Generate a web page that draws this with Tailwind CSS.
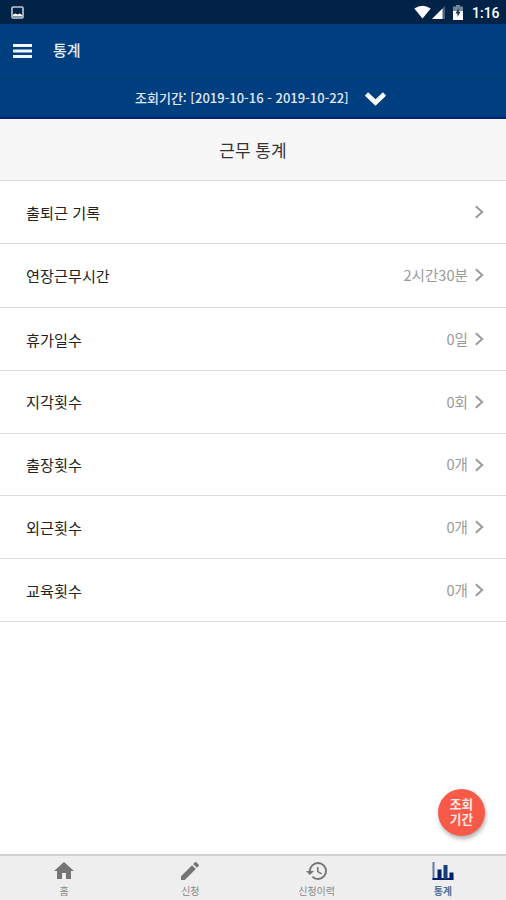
<!DOCTYPE html>
<html lang="ko">
<head>
<meta charset="utf-8">
<title>통계</title>
<script src="https://cdn.jsdelivr.net/npm/@tailwindcss/browser@4"></script>
</head>
<body class="bg-white">
<svg class="hidden"><symbol id="chev" viewBox="0 0 10 14"><path d="M1.800 1.200 8.200 7 1.800 12.800" fill="none" stroke="#9b9b9b" stroke-width="2"/></symbol></svg>
<div class="relative flex h-[900px] w-[506px] flex-col overflow-hidden bg-white font-['Noto_Sans_CJK_KR','Noto_Sans',sans-serif]">
  <div class="flex h-6 shrink-0 items-center bg-[#002347] pl-[11px] pr-[7px] text-white">
    <svg class="h-[13px] w-[13px]" viewBox="0 0 13 13"><rect x="1" y="1" width="11" height="11" rx="1" fill="none" stroke="#c3cbd8" stroke-width="1.6"/><path d="M2 10.500V8.500L4.500 7.500 6.500 8.500 9 7.500 11 9v1.500z" fill="#fff"/></svg>
    <svg class="ml-auto h-[14px] w-[17px]" viewBox="0 0 17 14"><path d="M0.3 3.6Q8.500-2 16.700 3.600L8.500 13.500z" fill="#fff"/></svg>
    <svg class="ml-[1px] mt-px h-[13px] w-[13px]" viewBox="0 0 13 13"><path d="M13 0v13H0z" fill="#4a617d"/><path d="M10.500 2.500V13H0z" fill="#fff"/></svg>
    <svg class="ml-[8px] h-[15px] w-[10px]" viewBox="0 0 10 15"><path d="M3 0h4v1.500h3V15H0V1.500h3z" fill="#71859c"/><path d="M0 6h10v9H0z" fill="#fff"/><path d="M5.800 3 2.500 8.500h2V12L7.600 6.700H5.800z" fill="#173654"/></svg>
    <span class="ml-[9px] w-[27px] whitespace-nowrap pt-[2px] font-[Roboto] text-[14px] font-medium leading-[22px]">1:16</span>
  </div>
  <header class="flex h-[53px] shrink-0 items-center bg-[#003f7f] pl-[13px] text-[#e4ecf8]">
    <svg class="h-[14px] w-[19px]" viewBox="0 0 19 14"><path d="M0 1.500h19M0 7h19M0 12.500h19" stroke="#f2f5fc" stroke-width="3"/></svg>
    <h1 class="-mt-[2px] ml-[21px] text-[15px] font-medium leading-6">통계</h1>
  </header>
  <div class="flex h-[42px] shrink-0 items-center border-t border-b-2 border-t-[#07396f] border-b-[#00207a] bg-[#003f7f] pl-[135px] text-[#e0e8f6]">
    <span class="w-[215px] whitespace-nowrap text-[13px] font-medium leading-5">조회기간: [2019-10-16 - 2019-10-22]</span>
    <svg class="ml-[15px] mt-[3px] h-[14px] w-[21px]" viewBox="0 0 21 14"><path d="M1.500 2 10.500 10.500 19.500 2" fill="none" stroke="#fff" stroke-width="4.600"/></svg>
  </div>
  <h2 class="flex h-[62px] shrink-0 items-center justify-center border-b border-[#dedede] bg-[#f7f7f7] pt-px text-[17px] leading-6 text-[#333]">근무 통계</h2>
  <ul class="text-[15.200px] leading-6 text-[#222]">
    <li class="flex h-[63px] items-center border-b border-[#dcdcdc] pl-[26px] pr-[22px]"><span class="grow">출퇴근 기록</span><svg class="ml-[6px] h-[14px] w-[10px]"><use href="#chev"/></svg></li>
    <li class="flex h-[64px] items-center border-b border-[#dcdcdc] pb-[2px] pl-[26px] pr-[22px]"><span class="grow">연장근무시간</span><span class="text-[14.600px] text-[#999]">2시간30분</span><svg class="ml-[6px] h-[14px] w-[10px]"><use href="#chev"/></svg></li>
    <li class="flex h-[63px] items-center border-b border-[#dcdcdc] pl-[26px] pr-[22px]"><span class="grow -mt-px">휴가일수</span><span class="text-[14.600px] text-[#999]">0일</span><svg class="ml-[6px] h-[14px] w-[10px]"><use href="#chev"/></svg></li>
    <li class="flex h-[63px] items-center border-b border-[#dcdcdc] pl-[26px] pr-[22px]"><span class="-mt-[2px] grow">지각횟수</span><span class="text-[14.600px] text-[#999]">0회</span><svg class="ml-[6px] h-[14px] w-[10px]"><use href="#chev"/></svg></li>
    <li class="flex h-[62px] items-center border-b border-[#dcdcdc] pl-[26px] pr-[22px]"><span class="-mt-[2px] grow">출장횟수</span><span class="-mt-px text-[14.600px] text-[#999]">0개</span><svg class="ml-[6px] h-[14px] w-[10px]"><use href="#chev"/></svg></li>
    <li class="flex h-[63px] items-center border-b border-[#dcdcdc] pl-[26px] pr-[22px]"><span class="grow">외근횟수</span><span class="text-[14.600px] text-[#999]">0개</span><svg class="ml-[6px] h-[14px] w-[10px]"><use href="#chev"/></svg></li>
    <li class="flex h-[63px] items-center border-b border-[#dcdcdc] pl-[26px] pr-[22px]"><span class="grow">교육횟수</span><span class="text-[14.600px] text-[#999]">0개</span><svg class="ml-[6px] h-[14px] w-[10px]"><use href="#chev"/></svg></li>
  </ul>
  <button class="absolute left-[438px] top-[789px] flex h-[47px] w-[47px] items-center justify-center rounded-full bg-[#f95a48] pb-[4px] text-center text-[12.700px] font-bold leading-[15px] text-[#ffe9e4] shadow-[1px_3px_4px_rgba(0,0,0,0.3)]">조회<br>기간</button>
  <nav class="mt-auto grid h-[46px] shrink-0 grid-cols-4 border-t-2 border-[#d0d0d0] bg-[#eee] pl-px text-[10px] leading-[14px] text-[#888]">
    <a class="flex flex-col items-center pt-[3px]"><svg class="h-6 w-6" viewBox="0 0 24 24" fill="#757575"><path d="M10 20v-6h4v6h5v-8h3L12 3 2 12h3v8z"/></svg><span class="mt-px">홈</span></a>
    <a class="flex flex-col items-center pt-[3px]"><svg class="h-6 w-6" viewBox="0 0 24 24" fill="#757575"><path d="M3 17.250V21h3.750L17.810 9.940l-3.750-3.750L3 17.250zM20.710 7.040a1 1 0 0 0 0-1.410l-2.340-2.340a1 1 0 0 0-1.410 0l-1.830 1.830 3.750 3.750 1.830-1.830z"/></svg><span class="mt-px">신청</span></a>
    <a class="flex flex-col items-center pt-[3px]"><svg class="h-6 w-6" viewBox="0 0 24 24" fill="#757575"><path d="M13 3a9 9 0 0 0-9 9H1l3.890 3.890.07.140L9 12H6c0-3.870 3.130-7 7-7s7 3.130 7 7-3.130 7-7 7c-1.930 0-3.680-.79-4.940-2.060l-1.420 1.420A8.950 8.950 0 0 0 13 21a9 9 0 0 0 0-18zm-1 5v5l4.280 2.540.72-1.210-3.500-2.080V8H12z"/></svg><span class="mt-px">신청이력</span></a>
    <a class="flex flex-col items-center pt-[3px] font-bold text-[#4d6f98]"><svg class="h-6 w-6" viewBox="0 0 24 24"><path d="M2.500 3v18" stroke="#5f7ca5" stroke-width="2"/><path d="M1.500 20h21" stroke="#001d68" stroke-width="2"/><path d="M6.500 10.500h4V20h-4zM18.500 13.500h4V20h-4z" fill="#001d68"/><path d="M12.500 6h4v14h-4z" fill="#163d7c"/></svg><span class="mt-px">통계</span></a>
  </nav>
</div>
</body>
</html>
